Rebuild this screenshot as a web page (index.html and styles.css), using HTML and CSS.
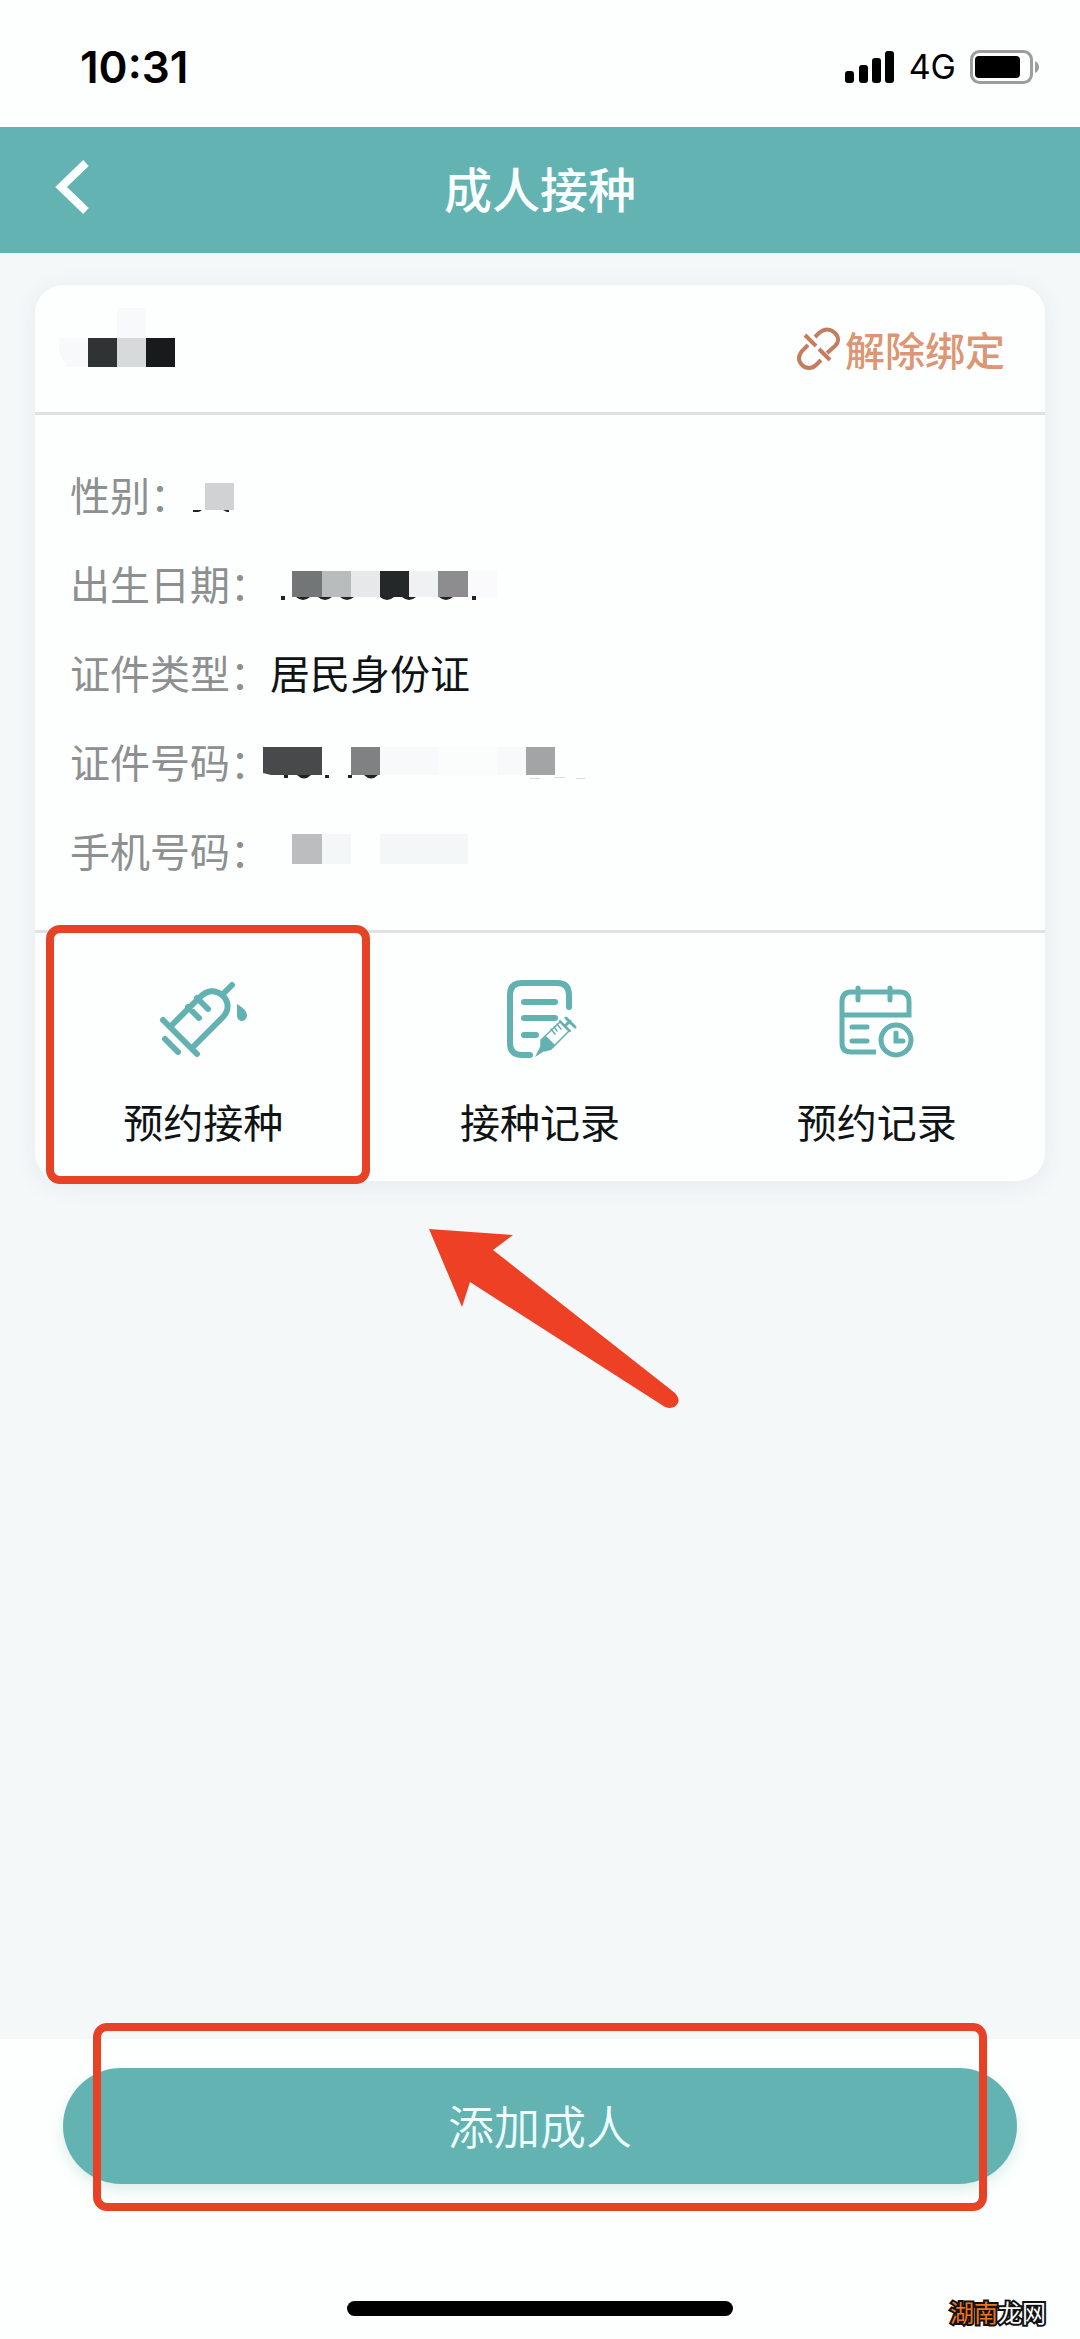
FILE: index.html
```html
<!DOCTYPE html>
<html lang="zh-CN">
<head>
<meta charset="utf-8">
<meta name="viewport" content="width=device-width, initial-scale=1">
<title>成人接种</title>
<link rel="stylesheet" href="styles.css">
</head>
<body>
<div class="status">
  <span class="time">10:31</span>
  <div class="status-right">
    <svg width="50" height="32" viewBox="0 0 50 32" aria-hidden="true"><rect x="0" y="20" width="9" height="12" rx="3"/><rect x="14" y="14" width="9" height="18" rx="3"/><rect x="27" y="7" width="9" height="25" rx="3"/><rect x="40" y="0" width="9" height="32" rx="3"/></svg>
    <span class="network">4G</span>
    <svg width="69" height="34" viewBox="0 0 69 34" aria-hidden="true"><rect x="1.5" y="1.5" width="60" height="31" rx="8" fill="none" stroke="#9b9d9e" stroke-width="3"/><rect x="5" y="6" width="45" height="22" rx="4"/><path d="M65 11q4 2 4 6t-4 6z" fill="#9b9d9e"/></svg>
  </div>
</div>
<header class="navbar">
  <button class="back" type="button" aria-label="返回"><svg width="36" height="56" viewBox="0 0 36 56"><path d="M33 4L8 28L33 52" fill="none" stroke="#fbffff" stroke-width="8"/></svg></button>
  <h1 class="title">成人接种</h1>
</header>
<main class="content">
  <section class="card">
    <div class="card-head">
      <svg class="mask" width="120" height="64" viewBox="0 0 120 64" role="img" aria-label="姓名已隐藏"><path fill="#f7f9fa" d="M58 1h29v30H58zM0 31h29v29H8L0 46z"/><path fill="#303333" d="M29 31h29v29H29z"/><path fill="#d7dada" d="M58 31h29v29H58z"/><path fill="#171b1c" d="M87 31h29v29H87z"/></svg>
      <button class="unbind" type="button">
        <svg width="44" height="44" viewBox="0 0 44 44" fill="none" stroke="#c57c5f" stroke-width="4" aria-hidden="true"><path d="M8 8L19 19M22 22L33 33"/><path d="M18 10L22 6C28 1 34 2 38 6C42 10 42 15 38 19L30 26"/><path d="M11 18L5 24C1 29 1 34 5 38C9 42 15 42 19 38L24 33"/></svg>
        <span>解除绑定</span>
      </button>
    </div>
    <dl class="details">
      <div class="row"><dt>性别：</dt><dd><svg class="mask" width="60" height="32" viewBox="0 0 60 32" role="img" aria-label="已隐藏"><path fill="#d0d3d4" d="M15 3h29v27H15z"/><path fill="#222" d="M3 30h9q-4 3-9 3zM33 30h6v3z"/></svg></dd></div>
      <div class="row"><dt>出生日期：</dt><dd><svg class="mask" width="230" height="32" viewBox="0 0 230 32" role="img" aria-label="已隐藏"><path fill="#737677" d="M22 2h30v26H22z"/><path fill="#b9bcbd" d="M52 2h29v26H52z"/><path fill="#e7e8e9" d="M81 2h29v26H81z"/><path fill="#242829" d="M110 2h29v26h-29z"/><path fill="#f0f1f3" d="M139 2h29v26h-29z"/><path fill="#8d8d90" d="M168 2h30v26h-30z"/><path fill="#fafafc" d="M198 2h29v26h-29z"/><path fill="#222" d="M11 27h4v4h-4zM26 28h14q-7 6-14 0M48 28h14q-7 6-14 0M70 28h14q-7 6-14 0M110 28h14q-7 6-14 0M132 28h14q-7 6-14 0M169 28h14q-7 6-14 0M202 27h4v4h-4z"/></svg></dd></div>
      <div class="row"><dt>证件类型：</dt><dd>居民身份证</dd></div>
      <div class="row"><dt>证件号码：</dt><dd><svg class="mask mask-wide" width="330" height="36" viewBox="0 0 330 36" role="img" aria-label="已隐藏"><path fill="#48494a" d="M0 2h59v28H8l-8-2z"/><path fill="#7f8182" d="M88 2h29v28H88z"/><path fill="#f7f9fa" d="M117 2h58v28h-58zM234 2h29v28h-29z"/><path fill="#fbfcfc" d="M175 2h59v28h-59z"/><path fill="#a2a4a5" d="M263 2h29v28h-29z"/><path fill="#222" d="M21 30h4v3h-4zM34 30h14q-7 7-14 0M62 30h4v3h-4zM85 30h4v3h-4zM101 30h14q-7 7-14 0"/><path fill="#ddd" d="M267 33h10v1h-10zM291 32h11v1h-11zM313 33h9v1h-9z"/></svg></dd></div>
      <div class="row"><dt>手机号码：</dt><dd><svg class="mask" width="210" height="38" viewBox="0 0 210 38" role="img" aria-label="已隐藏"><path fill="#bbbdbe" d="M22 1h30v30H22z"/><path fill="#f4f7f8" d="M52 1h29v30H52zM110 1h88v30h-88z"/></svg></dd></div>
    </dl>
    <nav class="actions">
      <button class="action" type="button">
        <svg width="88" height="88" viewBox="0 0 88 88" fill="none" stroke="#63b2b1" stroke-width="6" stroke-linecap="round" aria-hidden="true"><path d="M4 43l34 34M6 62l13 13M13 48l27-27C48 13 56 12 63 18s8 15 0 23L34 70M66 15l7-7M29 30l11 11M38 21l11 11"/><path d="M78 27q10 6 10 11c0 3-2 6-5 6s-5-2-5-6z" fill="#63b2b1" stroke="none"/></svg>
        <span>预约接种</span>
        <i class="marker marker-action"></i>
      </button>
      <button class="action" type="button">
        <svg width="88" height="88" viewBox="0 0 88 88" fill="none" stroke="#63b2b1" stroke-width="6" stroke-linecap="round" aria-hidden="true"><path d="M73 30V18Q73 6 61 6H26Q14 6 14 18v48q0 12 12 12h8M28 25h31M28 41h31M28 58h12"/><path d="M39 80l6-12 5 5z" fill="#63b2b1" stroke="none"/><path d="M45 63l19-18 9 9-18 18-6 2-4-4z" fill="#fdffff" stroke-width="1.5"/><path d="M45 63l5-4 9 9-4 4-6 2-4-4z" fill="#63b2b1" stroke="none"/><path d="M55 52l4 5M58 50l3 4M61 47l4 5" stroke-width="1.5"/><path d="M64 44l10 10" stroke-width="2"/><path d="M69 49l5-5M70 41l9 9" stroke-width="3"/></svg>
        <span>接种记录</span>
      </button>
      <button class="action" type="button">
        <svg width="88" height="88" viewBox="0 0 88 88" fill="none" stroke="#63b2b1" stroke-width="5" aria-hidden="true"><path d="M9 38h67V25q0-10-9-10H18q-9 0-9 10v41q0 9 9 9h25"/><path d="M25 11v12M57 11v12M19 50h15M19 64h15M63 56v8h7" stroke-linecap="round"/><circle cx="63" cy="63" r="15"/></svg>
        <span>预约记录</span>
      </button>
    </nav>
    <svg class="arrow" width="252" height="182" viewBox="0 0 252 182" aria-hidden="true"><path d="M0 0L84 6L64 21L246 164Q251 170 249 174Q245 181 236 178L41 53L33 78Z" fill="#ee4025"/></svg>
  </section>
</main>
<footer class="footer">
  <button class="add" type="button">添加成人</button>
  <i class="marker marker-add"></i>
  <div class="home-bar"></div>
  <div class="watermark"><span>湖南</span>龙网</div>
</footer>
</body>
</html>
```
FILE: styles.css
```css
* { box-sizing: border-box; }

body {
  margin: 0;
  min-height: 100vh;
  display: flex;
  flex-direction: column;
  background: #f4f8f9;
  color: #101314;
  font-family: "Noto Sans CJK SC", sans-serif;
  font-size: 40px;
  line-height: 60px;
}

svg { display: block; flex: none; }

button {
  margin: 0;
  padding: 0;
  border: 0;
  background: none;
  color: inherit;
  font: inherit;
  cursor: pointer;
}

.status {
  display: flex;
  align-items: center;
  justify-content: space-between;
  height: 127px;
  padding: 6px 41px 0 80px;
  background: #fdffff;
  color: #000;
  font-family: Inter, sans-serif;
}

.time { font-size: 44px; font-weight: 600; }

.status-right { display: flex; align-items: center; gap: 14px; }

.network { font-size: 34px; font-weight: 400; }

.navbar {
  display: grid;
  grid-template-columns: 120px 1fr 120px;
  align-items: center;
  height: 126px;
  padding-bottom: 6px;
  background: #63b3b2;
  color: #fbffff;
}

.back { justify-self: start; padding-left: 53px; }

.title {
  margin: 0;
  font-size: 48px;
  font-weight: 500;
  text-align: center;
}

.content { flex: 1; padding: 32px 35px; }

.card {
  position: relative;
  border-radius: 28px;
  background: #fdffff;
  box-shadow: 0 4px 24px rgba(60, 80, 90, 0.08);
}

.card-head {
  display: flex;
  align-items: center;
  justify-content: space-between;
  height: 130px;
  padding: 0 40px 0 24px;
  border-bottom: 3px solid #dddfe2;
}

.card-head .mask { margin-bottom: 20px; }

.unbind {
  display: flex;
  align-items: center;
  gap: 4px;
  color: #dc9673;
  font-weight: 500;
}

.details {
  margin: 0;
  padding: 34px 35px 36px;
  border-bottom: 3px solid #e0e3e4;
}

.row { display: flex; align-items: center; height: 89px; }

dt { color: #8d8f90; }

dd { margin: 0; }

.row .mask { margin-top: 4px; }

.row .mask-wide { margin-left: -7px; }

.actions { display: grid; grid-template-columns: repeat(3, 1fr); }

.action {
  position: relative;
  display: flex;
  flex-direction: column;
  align-items: center;
  gap: 26px;
  padding: 44px 0 30px;
}

.marker {
  position: absolute;
  border: 8px solid #e84226;
  border-radius: 14px;
  pointer-events: none;
}

.marker-action { inset: -8px 2px -3px 11px; }

.arrow {
  position: absolute;
  top: calc(100% + 48px);
  left: 39%;
  pointer-events: none;
}

.footer {
  position: relative;
  padding: 29px 63px 23px;
  background: #fdffff;
}

.add {
  display: block;
  width: 100%;
  height: 116px;
  padding-bottom: 4px;
  border-radius: 58px;
  background: #63b3b2;
  box-shadow: 0 6px 14px rgba(99, 179, 140, 0.22);
  color: #edffff;
  font-size: 46px;
  font-weight: 350;
}

.marker-add { inset: -16px 93px 128px; }

.home-bar {
  width: 386px;
  max-width: 60%;
  height: 15px;
  margin: 117px auto 0;
  border-radius: 8px;
  background: #000;
}

.watermark {
  position: absolute;
  right: 34px;
  bottom: 12px;
  color: #fff;
  font-size: 24px;
  font-weight: 400;
  line-height: 30px;
  -webkit-text-stroke: 4px #111;
  paint-order: stroke fill;
}

.watermark span { color: #ee7419; }
```
